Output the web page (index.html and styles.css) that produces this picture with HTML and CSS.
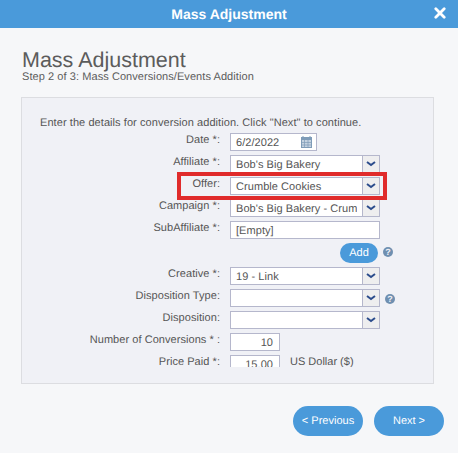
FILE: index.html
```html
<!DOCTYPE html>
<html lang="en">
<head>
<meta charset="utf-8">
<title>Mass Adjustment</title>
<link rel="stylesheet" href="styles.css">
</head>
<body>
<header class="topbar">
  <span class="topbar-title">Mass Adjustment</span>
  <svg class="close" viewBox="0 0 12 12" width="12" height="12"><path d="M1.8 1.8 L10.2 10.2 M10.2 1.8 L1.8 10.2" stroke="#fff" stroke-width="2.8" stroke-linecap="round" fill="none"/></svg>
</header>
<main class="content">
  <h1 class="title">Mass Adjustment</h1>
  <p class="step">Step 2 of 3: Mass Conversions/Events Addition</p>
  <section class="panel">
    <p class="intro">Enter the details for conversion addition. Click "Next" to continue.</p>
    <div class="form">
      <div class="row"><label class="label">Date *:</label>
        <div class="field date"><span class="val">6/2/2022</span>
          <svg class="cal" viewBox="0 0 11 12" width="11" height="12"><rect x="0.5" y="1.5" width="10" height="10" fill="#c4d2e0" stroke="#7f9cb8"/><rect x="0.5" y="1.5" width="10" height="2.5" fill="#7f9cb8"/><path d="M2 0v3M9 0v3" stroke="#7f9cb8"/><path d="M0 6.5h11M0 9h11M3.5 4v8M7 4v8" stroke="#7f9cb8" stroke-width=".7"/></svg>
        </div></div>
      <div class="row"><label class="label">Affiliate *:</label><div class="combo"><span class="val">Bob's Big Bakery</span><span class="arrow"><svg viewBox="0 0 10 6" width="10" height="6"><path d="M1 1l4 3 4-3" stroke="#2b4c8c" stroke-width="2" fill="none"/></svg></span></div></div>
      <div class="row"><label class="label">Offer:</label><div class="combo"><span class="val">Crumble Cookies</span><span class="arrow"><svg viewBox="0 0 10 6" width="10" height="6"><path d="M1 1l4 3 4-3" stroke="#2b4c8c" stroke-width="2" fill="none"/></svg></span></div></div>
      <div class="row"><label class="label">Campaign *:</label><div class="combo"><span class="val">Bob's Big Bakery - Crumble Cookies</span><span class="arrow"><svg viewBox="0 0 10 6" width="10" height="6"><path d="M1 1l4 3 4-3" stroke="#2b4c8c" stroke-width="2" fill="none"/></svg></span></div></div>
      <div class="row"><label class="label">SubAffiliate *:</label><div class="field wide"><span class="val">[Empty]</span></div></div>
      <div class="add-row">
        <span class="pill add">Add</span>
        <svg class="help" viewBox="0 0 10 10" width="10" height="10"><circle cx="5" cy="5" r="5" fill="#6f8fb0"/><text x="5" y="8.2" text-anchor="middle" class="help-q">?</text></svg>
      </div>
      <div class="row"><label class="label">Creative *:</label><div class="combo"><span class="val">19 - Link</span><span class="arrow"><svg viewBox="0 0 10 6" width="10" height="6"><path d="M1 1l4 3 4-3" stroke="#2b4c8c" stroke-width="2" fill="none"/></svg></span></div></div>
      <div class="row"><label class="label">Disposition Type:</label><div class="combo"><span class="val"></span><span class="arrow"><svg viewBox="0 0 10 6" width="10" height="6"><path d="M1 1l4 3 4-3" stroke="#2b4c8c" stroke-width="2" fill="none"/></svg></span></div>
        <svg class="help help-side" viewBox="0 0 10 10" width="10" height="10"><circle cx="5" cy="5" r="5" fill="#6f8fb0"/><text x="5" y="8.2" text-anchor="middle" class="help-q">?</text></svg></div>
      <div class="row"><label class="label">Disposition:</label><div class="combo"><span class="val"></span><span class="arrow"><svg viewBox="0 0 10 6" width="10" height="6"><path d="M1 1l4 3 4-3" stroke="#2b4c8c" stroke-width="2" fill="none"/></svg></span></div></div>
      <div class="row"><label class="label">Number of Conversions * :</label><div class="field num"><span class="val">10</span></div></div>
      <div class="row"><label class="label">Price Paid *:</label><div class="field num"><span class="val">15.00</span></div><span class="unit">US Dollar ($)</span></div>
    </div>
    <div class="highlight"></div>
  </section>
  <footer class="actions">
    <span class="pill nav">&lt; Previous</span>
    <span class="pill nav">Next &gt;</span>
  </footer>
</main>
</body>
</html>
```
FILE: styles.css
```css
* { box-sizing: border-box; }
html, body { margin: 0; padding: 0; }
body {
  width: 458px;
  height: 453px;
  overflow: hidden;
  background: #f6f7f9;
  font-family: "Liberation Sans", Arial, sans-serif;
  color: #555;
  text-rendering: geometricPrecision;
}
.topbar {
  height: 28px;
  background: #4a9ada;
  display: flex;
  align-items: center;
  justify-content: center;
  position: relative;
}
.topbar-title {
  color: #fff;
  font-size: 14px;
  font-weight: bold;
}
.close { position: absolute; left: 434px; top: 7px; }
.content { padding: 20px 24px 0 21px; }
.title {
  margin: 0 0 0 1px;
  font-size: 21.5px;
  line-height: 24px;
  font-weight: normal;
  color: #5c5c5c;
}
.step {
  margin: -1px 0 0 1px;
  font-size: 11px;
  line-height: 12px;
  letter-spacing: 0.07px;
  color: #5c5c5c;
}
.panel {
  position: relative;
  margin-top: 14px;
  width: 413px;
  height: 287px;
  background: #f0f1f6;
  border: 1px solid #dcdde1;
  padding: 18px 0 0 18px;
}
.intro {
  margin: 0;
  font-size: 11px;
  line-height: 14px;
  letter-spacing: 0.07px;
  color: #555;
}
.form {
  margin: 3px 0 0 -18px;
  height: 234px;
  overflow: hidden;
}
.row {
  display: flex;
  align-items: flex-start;
  height: 22px;
}
.label {
  width: 198px;
  flex: none;
  text-align: right;
  font-size: 11px;
  line-height: 14px;
  letter-spacing: 0.05px;
  color: #555;
}
.field, .combo {
  height: 18px;
  margin-left: 10px;
  background: #fff;
  border: 1px solid #b5b7cc;
  display: flex;
  align-items: center;
  font-size: 11px;
  color: #555;
  flex: none;
}
.val {
  padding: 1px 0 0 5px;
  white-space: nowrap;
  overflow: hidden;
  flex: 1;
  min-width: 0;
  letter-spacing: 0.06px;
}
.date { width: 87px; }
.cal { margin-right: 4px; flex: none; }
.wide { width: 150px; }
.combo { width: 150px; }
.arrow {
  width: 17px;
  height: 16px;
  flex: none;
  margin-left: 5px;
  background: #eeeeef;
  border-left: 1px solid #b5b7cc;
  display: flex;
  align-items: center;
  justify-content: center;
}
.num { width: 50px; }
.num .val { text-align: right; padding: 1px 6px 0 0; }
.unit { margin-left: 10px; font-size: 11px; line-height: 14px; color: #555; }
.add-row {
  height: 24px;
  display: flex;
  align-items: flex-start;
  padding-left: 318px;
}
.pill {
  display: flex;
  align-items: center;
  justify-content: center;
  background: #4a9ada;
  color: #fff;
  font-size: 11px;
}
.add { width: 38px; height: 20px; border-radius: 10px; padding-bottom: 1px; }
.help { flex: none; }
.add-row .help { margin: 4px 0 0 5px; }
.help-side { margin: 5px 0 0 5px; }
.help-q { font: bold 9px "Liberation Sans", Arial, sans-serif; fill: #f0f1f6; }
.highlight {
  position: absolute;
  left: 155px;
  top: 74px;
  width: 210px;
  height: 28px;
  border: 4px solid #e02b2b;
  pointer-events: none;
}
.actions {
  display: flex;
  gap: 11px;
  margin: 22px 0 0 272px;
}
.nav { width: 70px; height: 30px; border-radius: 15px; flex: none; }
```
